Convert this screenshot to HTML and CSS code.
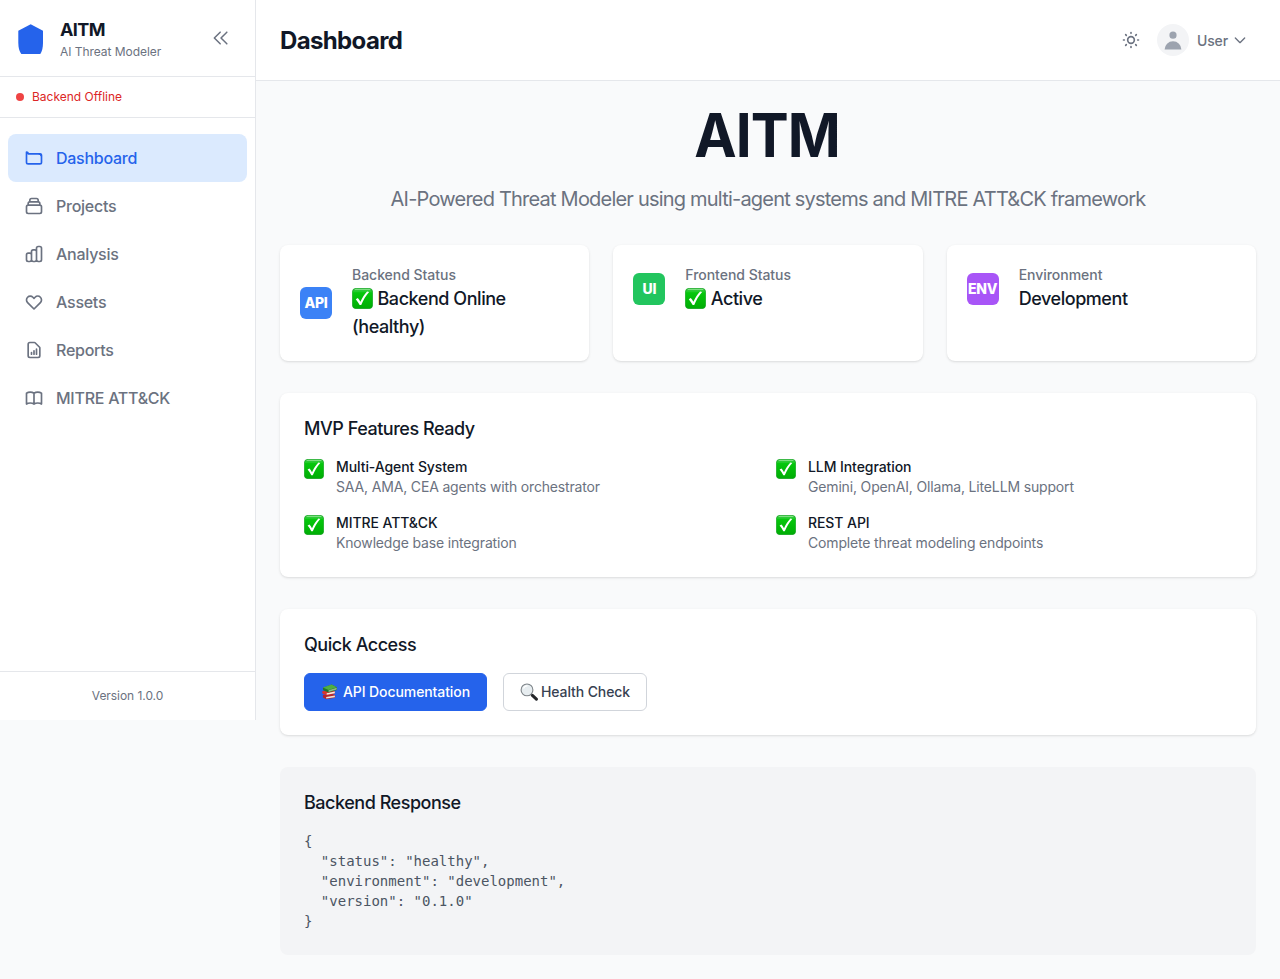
FILE: index.html
```html
<!DOCTYPE html>
<html lang="en">
<head>
<meta charset="utf-8">
<title>AITM - Dashboard</title>
<link rel="stylesheet" href="styles.css">
</head>
<body>
<svg class="defs" aria-hidden="true">
  <defs>
    <linearGradient id="green" x1="0" y1="0" x2="0" y2="1">
      <stop offset="0" stop-color="#3fc94a"/><stop offset=".16" stop-color="#22cb2b"/><stop offset=".22" stop-color="#05c70c"/><stop offset="1" stop-color="#00ad05"/>
    </linearGradient>
    <symbol id="check" viewBox="0 0 20 20">
      <rect x=".3" y=".3" width="19.4" height="19.4" rx="3.8" fill="url(#green)" stroke="#0b9a1a" stroke-width=".6"/>
      <path d="M3 1.500h14" stroke="#7ddf80" stroke-width="1" stroke-linecap="round"/>
      <path d="M3.600 10.600l1.900-1.100c1 1.200 1.800 2.300 2.500 3.700 1.600-3.700 3.800-7 6.400-9.800l1.900.5c-3.200 3.700-5.600 7.700-7.500 12.400H7.300C6.300 14.300 5.100 12.400 3.600 10.600z" fill="#fff"/>
    </symbol>
  </defs>
</svg>
<div class="layout">
  <aside class="sidebar">
    <div class="brand">
      <svg class="logo" viewBox="0 0 32 32"><path fill="#2563eb" d="M14.700 2.300L27 8.700V21c0 4.500-.9 8.300-2.700 11h-19C3.300 29.300 2.300 25.500 2.300 21V8.700z"/></svg>
      <div class="brand-text"><div class="brand-name">AITM</div><div class="brand-sub">AI Threat Modeler</div></div>
      <button class="collapse" aria-label="Collapse sidebar"><svg class="icon" viewBox="0 0 24 24"><path d="M11 19l-7-7 7-7m8 14l-7-7 7-7"/></svg></button>
    </div>
    <div class="status"><i class="dot"></i><span>Backend Offline</span></div>
    <nav class="nav">
      <a class="nav-item active"><svg class="icon" viewBox="0 0 24 24"><path d="M3 7v10a2 2 0 002 2h14a2 2 0 002-2V9a2 2 0 00-2-2H5a2 2 0 00-2-2z"/><path d="M18.500 7.500h1.800v1.500"/></svg><span>Dashboard</span></a>
      <a class="nav-item"><svg class="icon" viewBox="0 0 24 24"><path d="M19 11H5m14 0a2 2 0 012 2v6a2 2 0 01-2 2H5a2 2 0 01-2-2v-6a2 2 0 012-2m14 0V9a2 2 0 00-2-2M5 11V9a2 2 0 012-2m0 0V5a2 2 0 012-2h6a2 2 0 012 2v2M7 7h10"/></svg><span>Projects</span></a>
      <a class="nav-item"><svg class="icon" viewBox="0 0 24 24"><path d="M9 19v-6a2 2 0 00-2-2H5a2 2 0 00-2 2v6a2 2 0 002 2h2a2 2 0 002-2zm0 0V9a2 2 0 012-2h2a2 2 0 012 2v10m-6 0a2 2 0 002 2h2a2 2 0 002-2m0 0V5a2 2 0 012-2h2a2 2 0 012 2v14a2 2 0 01-2 2h-2a2 2 0 01-2-2z"/></svg><span>Analysis</span></a>
      <a class="nav-item"><svg class="icon" viewBox="0 0 24 24"><path d="M4.318 6.318a4.500 4.500 0 000 6.364L12 20.364l7.682-7.682a4.500 4.500 0 00-6.364-6.364L12 7.636l-1.318-1.318a4.500 4.500 0 00-6.364 0z"/></svg><span>Assets</span></a>
      <a class="nav-item"><svg class="icon" viewBox="0 0 24 24"><path d="M9 17v-2m3 2v-4m3 4v-6m2 10H7a2 2 0 01-2-2V5a2 2 0 012-2h5.586a1 1 0 01.707.293l5.414 5.414a1 1 0 01.293.707V19a2 2 0 01-2 2z"/></svg><span>Reports</span></a>
      <a class="nav-item"><svg class="icon" viewBox="0 0 24 24"><path d="M12 6.253v13m0-13C10.832 5.477 9.246 5 7.500 5S4.168 5.477 3 6.253v13C4.168 18.477 5.754 18 7.500 18s3.332.477 4.500 1.253m0-13C13.168 5.477 14.754 5 16.500 5c1.747 0 3.332.477 4.500 1.253v13C19.832 18.477 18.247 18 16.500 18c-1.746 0-3.332.477-4.500 1.253"/></svg><span>MITRE ATT&amp;CK</span></a>
    </nav>
    <div class="version">Version 1.0.0</div>
  </aside>
  <div class="page">
    <header class="topbar">
      <h1 class="page-title">Dashboard</h1>
      <div class="tools">
        <svg class="icon" viewBox="0 0 24 24"><path d="M12 3v1m0 16v1m9-9h-1M4 12H3m15.364 6.364l-.707-.707M6.343 6.343l-.707-.707m12.728 0l-.707.707M6.343 17.657l-.707.707M16 12a4 4 0 11-8 0 4 4 0 018 0z"/></svg>
        <div class="user">
          <div class="avatar"><svg viewBox="0 0 20 20"><path d="M10 9a3 3 0 100-6 3 3 0 000 6zm-7 9a7 7 0 1114 0H3z"/></svg></div>
          <span class="user-name">User</span>
          <svg class="icon caret" viewBox="0 0 24 24"><path d="M19 9l-7 7-7-7"/></svg>
        </div>
      </div>
    </header>
    <main class="content">
      <section class="hero"><h2 class="hero-title">AITM</h2><p class="hero-sub">AI-Powered Threat Modeler using multi-agent systems and MITRE ATT&amp;CK framework</p></section>
      <section class="cards">
        <div class="card"><div class="card-row"><div class="badge blue">API</div><div><div class="label">Backend Status</div><div class="value"><svg class="check-inline"><use href="#check"/></svg>Backend Online<br>(healthy)</div></div></div></div>
        <div class="card"><div class="card-row"><div class="badge green">UI</div><div><div class="label">Frontend Status</div><div class="value"><svg class="check-inline"><use href="#check"/></svg>Active</div></div></div></div>
        <div class="card"><div class="card-row"><div class="badge purple">ENV</div><div><div class="label">Environment</div><div class="value">Development</div></div></div></div>
      </section>
      <section class="panel">
        <h3 class="heading">MVP Features Ready</h3>
        <div class="features">
          <div class="feature"><svg class="check"><use href="#check"/></svg><div><div class="f-title">Multi-Agent System</div><div class="f-desc">SAA, AMA, CEA agents with orchestrator</div></div></div>
          <div class="feature"><svg class="check"><use href="#check"/></svg><div><div class="f-title">LLM Integration</div><div class="f-desc">Gemini, OpenAI, Ollama, LiteLLM support</div></div></div>
          <div class="feature"><svg class="check"><use href="#check"/></svg><div><div class="f-title">MITRE ATT&amp;CK</div><div class="f-desc">Knowledge base integration</div></div></div>
          <div class="feature"><svg class="check"><use href="#check"/></svg><div><div class="f-title">REST API</div><div class="f-desc">Complete threat modeling endpoints</div></div></div>
        </div>
      </section>
      <section class="panel">
        <h3 class="heading">Quick Access</h3>
        <div class="actions">
          <a class="btn primary"><svg class="books" viewBox="0 0 18 18">
            <path d="M2 12.200l9-1.500 4 1.800-.2 2.600-9.200 1.600-3.500-2z" fill="#b3262e"/><path d="M5.500 14.300l9.200-1.500v1.700l-9.200 1.500z" fill="#ece4d8"/>
            <path d="M1.200 8.200l9-1.500 4.600 1.700-.2 2.500-8.600 1.600-4.400-1.600z" fill="#d8352f"/><path d="M6 10.200l8.600-1.600v1.600L6 11.800z" fill="#f3ede1"/>
            <path d="M2 4.500L11.200 1l5.600 3v3L8 9.400 2.300 7.200z" fill="#20752b"/><path d="M2 4.300L11.200 1l5.600 2.900L8 6.800z" fill="#4fae43"/><path d="M8 7.200l8.600-2.700v1.800L8 8.900z" fill="#8fb487"/></svg><span>API Documentation</span></a>
          <a class="btn"><svg class="lens" viewBox="0 0 18 18"><path d="M10.800 11l2 1.800" stroke="#777" stroke-width="1.800"/><path d="M12.400 12.400l4 3.800" stroke="#24262a" stroke-width="3" stroke-linecap="round"/><circle cx="7" cy="6.900" r="5.900" fill="#e7edf0" stroke="#7d8388" stroke-width="1.100"/><path d="M3.500 5.500A4 4 0 017.500 2.800" stroke="#fff" stroke-width="1.200" fill="none"/></svg><span>Health Check</span></a>
        </div>
      </section>
      <section class="panel muted">
        <h3 class="heading">Backend Response</h3>
<pre class="code">{
  "status": "healthy",
  "environment": "development",
  "version": "0.1.0"
}</pre>
      </section>
    </main>
  </div>
</div>
</body>
</html>
```
FILE: styles.css
```css
* { box-sizing: border-box; margin: 0; padding: 0; }
body { background: #f9fafb; color: #111827; font-family: Inter, "Liberation Sans", sans-serif; font-size: 16px; line-height: 24px; }
.defs { position: absolute; width: 0; height: 0; }
.layout { display: flex; align-items: flex-start; }

.icon { display: block; flex: none; width: 20px; height: 20px; fill: none; stroke: currentColor; stroke-width: 2; stroke-linecap: round; stroke-linejoin: round; }

.sidebar { display: flex; flex-direction: column; flex: none; width: 256px; height: 720px; background: #fff; border-right: 1px solid #e5e7eb; }
.brand { display: flex; align-items: center; height: 77px; padding: 0 16px; border-bottom: 1px solid #e5e7eb; }
.logo { width: 32px; height: 32px; margin-right: 12px; }
.brand-text { flex: 1; }
.brand-name { font-size: 18px; line-height: 28px; font-weight: 700; letter-spacing: -.6px; }
.brand-sub { font-size: 12px; line-height: 16px; color: #6b7280; letter-spacing: -.04px; }
.collapse { padding: 8px; border: 0; background: none; color: #6b7280; }
.collapse .icon { stroke-width: 1.8; }
.status { display: flex; align-items: center; gap: 8px; height: 41px; padding: 0 16px; border-bottom: 1px solid #e5e7eb; font-size: 12px; line-height: 16px; color: #dc2626; }
.dot { width: 8px; height: 8px; border-radius: 50%; background: #ef4444; }
.nav { flex: 1; padding: 16px 8px; }
.nav-item { display: flex; align-items: center; gap: 12px; height: 48px; padding: 0 16px; border-radius: 8px; font-weight: 500; letter-spacing: -.26px; color: #6b7280; }
.nav-item.active { background: #dbeafe; color: #2563eb; }
.version { padding: 16px; border-top: 1px solid #e5e7eb; text-align: center; font-size: 12px; line-height: 16px; color: #6b7280; letter-spacing: -.05px; }

.page { flex: 1; min-width: 0; }
.topbar { display: flex; align-items: center; justify-content: space-between; height: 81px; padding: 0 32px 0 24px; background: #fff; border-bottom: 1px solid #e5e7eb; }
.page-title { padding-top: 2px; font-size: 24px; line-height: 32px; font-weight: 700; letter-spacing: -.64px; }
.tools { display: flex; align-items: center; gap: 16px; color: #6b7280; }
.user { display: flex; align-items: center; }
.avatar { display: flex; align-items: center; justify-content: center; width: 32px; height: 32px; margin-right: 8px; border-radius: 50%; background: #f3f4f6; }
.avatar svg { width: 24px; height: 24px; fill: #9ca3af; }
.user-name { padding-top: 2px; font-size: 14px; line-height: 20px; font-weight: 500; letter-spacing: -.13px; }
.caret { width: 16px; height: 16px; margin-left: 4px; }

.content { padding: 24px; }
.hero { text-align: center; }
.hero-title { font-size: 60px; line-height: 60px; font-weight: 700; letter-spacing: -1px; text-indent: -2px; transform: scaleX(.947); }
.hero-sub { margin-top: 20px; font-size: 20px; line-height: 28px; letter-spacing: -.79px; color: #6b7280; }
.cards { display: grid; grid-template-columns: repeat(3, 1fr); gap: 24px; margin-top: 32px; }
.card, .panel { background: #fff; border-radius: 8px; box-shadow: 0 1px 3px rgba(0, 0, 0, .1), 0 1px 2px -1px rgba(0, 0, 0, .1); }
.card { padding: 20px; }
.card-row { display: flex; align-items: center; gap: 20px; }
.badge { display: flex; align-items: center; justify-content: center; flex: none; width: 32px; height: 32px; border-radius: 6px; color: #fff; font-size: 14px; font-weight: 800; letter-spacing: -.3px; }
.blue { background: #3b82f6; }
.green { background: #22c55e; }
.purple { background: #a855f7; }
.label { font-size: 14px; line-height: 20px; font-weight: 500; letter-spacing: -.03px; color: #6b7280; }
.value { font-size: 18px; line-height: 28px; font-weight: 500; letter-spacing: -.45px; }
.check-inline { width: 21px; height: 21px; margin-right: 4.5px; vertical-align: -4px; }

.panel { margin-top: 32px; padding: 24px; }
.heading { margin-bottom: 16px; font-size: 18px; line-height: 24px; font-weight: 500; letter-spacing: -.47px; }
.features { display: grid; grid-template-columns: 1fr 1fr; gap: 16px; }
.feature { display: flex; gap: 12px; font-size: 14px; line-height: 20px; }
.check { flex: none; width: 20px; height: 20px; margin-top: 2px; }
.f-title { font-weight: 500; letter-spacing: -.08px; }
.f-desc { color: #6b7280; letter-spacing: -.16px; }
.actions { display: flex; gap: 16px; }
.btn { display: flex; align-items: center; justify-content: center; width: 144px; height: 38px; border: 1px solid #d1d5db; border-radius: 6px; background: #fff; color: #374151; font-size: 14px; line-height: 20px; font-weight: 500; letter-spacing: -.09px; }
.btn.primary { width: 183px; border-color: #2563eb; background: #2563eb; color: #fff; }
.books { width: 17px; height: 18px; margin-right: 5px; }
.lens { width: 18px; height: 18px; margin-right: 3px; }
.muted { background: #f3f4f6; box-shadow: none; }
.code { font-family: "DejaVu Sans Mono", monospace; font-size: 14px; line-height: 20px; color: #4b5563; }
```
